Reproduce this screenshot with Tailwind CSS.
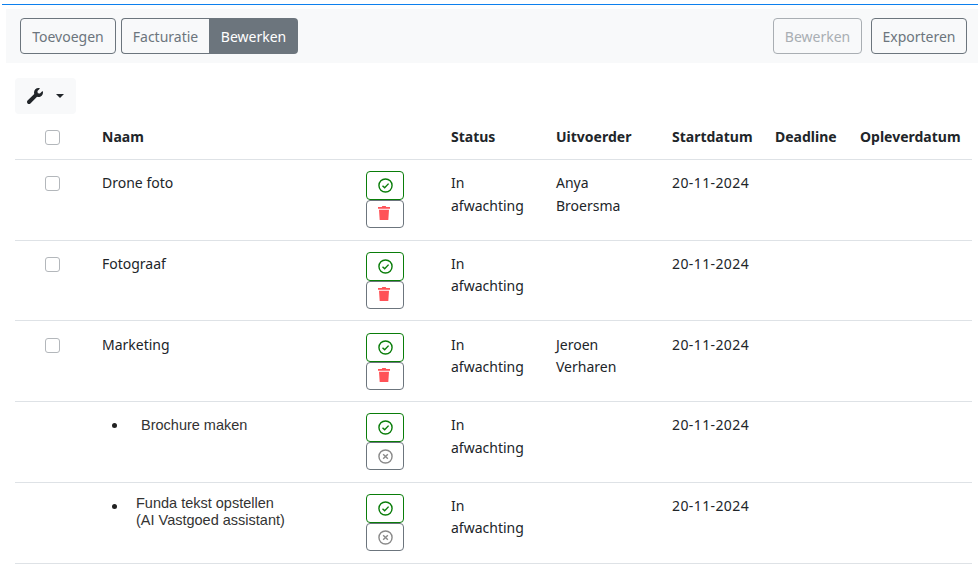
<!DOCTYPE html>
<html lang="nl">
<head>
<meta charset="utf-8"/>
<title>Taken</title>
<script src="https://cdn.jsdelivr.net/npm/@tailwindcss/browser@4"></script>
</head>
<body class="bg-white font-['Noto_Sans',sans-serif] text-[14px] leading-[22.5px] text-[#212529] overflow-hidden h-[577px]">
<div class="h-[5px] border-b border-[#0d80ee] ml-[2px]"></div>

<!-- toolbar -->
<div class="mt-1 ml-1.5 h-[54px] bg-[#f8f9fa] flex items-center pl-3.5 pr-[11px] gap-[5px] leading-[23px]">
  <button class="h-9 w-[96px] border border-[#6c757d] rounded text-[#6c757d]">Toevoegen</button>
  <div class="flex h-9">
    <button class="w-[88px] border border-[#6c757d] border-r-0 rounded-l text-[#6c757d]">Facturatie</button>
    <button class="w-[89px] bg-[#6c757d] rounded-r text-white">Bewerken</button>
  </div>
  <button class="ml-auto h-9 w-[89px] border border-[#a9aeb3] rounded text-[#a9aeb3]">Bewerken</button>
  <button class="ml-1 h-9 w-[96px] border border-[#6c757d] rounded text-[#6c757d]">Exporteren</button>
</div>

<div class="ml-[15px] w-[957px]">
  <button class="mt-[15px] h-9 w-[61px] bg-[#f8f9fa] rounded flex items-center pl-[12px] gap-[13px]">
    <svg class="w-4 h-4" viewBox="0 0 512 512" fill="#212529"><path d="M507.700 109.100c-2.200-9-13.500-12.100-20.100-5.500l-74.400 74.400-67.900-11.300-11.300-67.900 74.400-74.400c6.600-6.600 3.400-17.900-5.700-20.200-47.400-11.700-99.600.9-136.600 37.900-39.600 39.600-50.500 97.100-34 147.200L18.700 402.800c-25 25-25 65.500 0 90.500 25 25 65.500 25 90.500 0l213.200-213.200c50.100 16.700 107.500 5.700 147.400-34.200 37.100-37.100 49.700-89.300 37.900-136.800z"/></svg>
    <span class="w-0 h-0 border-x-[4px] border-x-transparent border-t-[4px] border-t-[#212529]"></span>
  </button>

  <!-- header -->
  <div class="grid grid-cols-[87px_264px_85px_105px_116px_103px_85px_112px] h-[46px] items-center border-b border-[#dee2e6] font-bold text-[14px] leading-[23px]">
    <div class="pl-[30px] pt-px flex"><span class="w-[15px] h-[15px] border border-[#b3b7bb] rounded-[3px] bg-white"></span></div>
    <div>Naam</div><div></div><div>Status</div><div>Uitvoerder</div><div>Startdatum</div><div>Deadline</div><div>Opleverdatum</div>
  </div>

  <!-- Drone foto -->
  <div class="grid grid-cols-[87px_264px_85px_105px_116px_103px_85px_112px] h-[80.7px] border-b border-[#dee2e6] pt-[12.200px]">
    <div class="pl-[30px] pt-[4.100px]"><span class="block w-[15px] h-[15px] border border-[#b3b7bb] rounded-[3px] bg-white"></span></div>
    <div>Drone foto</div>
    <div class="flex flex-col w-[38px] -mt-[0.900px]">
      <button class="h-[29px] border border-[#0a7d0a] rounded flex items-center justify-center"><svg class="w-[15px] h-[15px]" viewBox="0 0 16 16" fill="none" stroke="#0a7d0a" stroke-width="1.500"><circle cx="8" cy="8" r="7"/><path d="M4.800 8.200l2.300 2.300 4.200-4.500"/></svg></button>
      <button class="h-[28px] border border-[#6c757d] rounded flex items-center justify-center"><svg class="w-[14px] h-[16px] -translate-x-px -translate-y-px" viewBox="0 0 14 16" fill="#ff5257"><path d="M1 2h3.800l.5-1h3.400l.5 1H13v1.800H1zM2 4.800h10l-.7 10.200H2.700z"/></svg></button>
    </div>
    <div>In<br/>afwachting</div>
    <div>Anya<br/>Broersma</div>
    <div class="tracking-[0.4px]">20-11-2024</div><div></div><div></div>
  </div>

  <!-- Fotograaf -->
  <div class="grid grid-cols-[87px_264px_85px_105px_116px_103px_85px_112px] h-[80.7px] border-b border-[#dee2e6] pt-[12.200px]">
    <div class="pl-[30px] pt-[4.100px]"><span class="block w-[15px] h-[15px] border border-[#b3b7bb] rounded-[3px] bg-white"></span></div>
    <div>Fotograaf</div>
    <div class="flex flex-col w-[38px] -mt-[0.900px]">
      <button class="h-[29px] border border-[#0a7d0a] rounded flex items-center justify-center"><svg class="w-[15px] h-[15px]" viewBox="0 0 16 16" fill="none" stroke="#0a7d0a" stroke-width="1.500"><circle cx="8" cy="8" r="7"/><path d="M4.800 8.200l2.300 2.300 4.200-4.500"/></svg></button>
      <button class="h-[28px] border border-[#6c757d] rounded flex items-center justify-center"><svg class="w-[14px] h-[16px] -translate-x-px -translate-y-px" viewBox="0 0 14 16" fill="#ff5257"><path d="M1 2h3.800l.5-1h3.400l.5 1H13v1.800H1zM2 4.800h10l-.7 10.200H2.700z"/></svg></button>
    </div>
    <div>In<br/>afwachting</div>
    <div></div>
    <div class="tracking-[0.4px]">20-11-2024</div><div></div><div></div>
  </div>

  <!-- Marketing -->
  <div class="grid grid-cols-[87px_264px_85px_105px_116px_103px_85px_112px] h-[80.7px] border-b border-[#dee2e6] pt-[12.200px]">
    <div class="pl-[30px] pt-[4.100px]"><span class="block w-[15px] h-[15px] border border-[#b3b7bb] rounded-[3px] bg-white"></span></div>
    <div>Marketing</div>
    <div class="flex flex-col w-[38px] -mt-[0.900px]">
      <button class="h-[29px] border border-[#0a7d0a] rounded flex items-center justify-center"><svg class="w-[15px] h-[15px]" viewBox="0 0 16 16" fill="none" stroke="#0a7d0a" stroke-width="1.500"><circle cx="8" cy="8" r="7"/><path d="M4.800 8.200l2.300 2.300 4.200-4.500"/></svg></button>
      <button class="h-[28px] border border-[#6c757d] rounded flex items-center justify-center"><svg class="w-[14px] h-[16px] -translate-x-px -translate-y-px" viewBox="0 0 14 16" fill="#ff5257"><path d="M1 2h3.800l.5-1h3.400l.5 1H13v1.800H1zM2 4.800h10l-.7 10.200H2.700z"/></svg></button>
    </div>
    <div>In<br/>afwachting</div>
    <div>Jeroen<br/>Verharen</div>
    <div class="tracking-[0.4px]">20-11-2024</div><div></div><div></div>
  </div>

  <!-- Brochure maken -->
  <div class="grid grid-cols-[87px_264px_85px_105px_116px_103px_85px_112px] h-[80.7px] border-b border-[#dee2e6] pt-[12.200px]">
    <div></div>
    <div class="relative -ml-[87px] font-['Liberation_Sans',sans-serif] text-[14.500px] text-[#333] leading-[17px] pt-[3.100px] pl-[126px]">
      <span class="absolute left-[97px] top-[9.100px] w-[5px] h-[5px] rounded-full bg-[#222]"></span>Brochure maken
    </div>
    <div class="flex flex-col w-[38px] -mt-[0.900px]">
      <button class="h-[29px] border border-[#0a7d0a] rounded flex items-center justify-center"><svg class="w-[15px] h-[15px]" viewBox="0 0 16 16" fill="none" stroke="#0a7d0a" stroke-width="1.500"><circle cx="8" cy="8" r="7"/><path d="M4.800 8.200l2.300 2.300 4.200-4.500"/></svg></button>
      <button class="h-[28px] border border-[#6c757d] rounded flex items-center justify-center"><svg class="w-[15px] h-[15px]" viewBox="0 0 16 16" fill="none" stroke="#8a8a8a" stroke-width="1.500"><circle cx="8" cy="8" r="7"/><path d="M5.500 5.500l5 5m0-5l-5 5"/></svg></button>
    </div>
    <div>In<br/>afwachting</div>
    <div></div>
    <div class="tracking-[0.4px]">20-11-2024</div><div></div><div></div>
  </div>

  <!-- Funda tekst -->
  <div class="grid grid-cols-[87px_264px_85px_105px_116px_103px_85px_112px] h-[81px] border-b border-[#dee2e6] pt-[12.200px]">
    <div></div>
    <div class="relative -ml-[87px] font-['Liberation_Sans',sans-serif] text-[14.500px] text-[#333] leading-[17px] pt-[0.100px] pl-[121px]">
      <span class="absolute left-[97px] top-[9.100px] w-[5px] h-[5px] rounded-full bg-[#222]"></span>Funda tekst opstellen<br/>(AI Vastgoed assistant)
    </div>
    <div class="flex flex-col w-[38px] -mt-[0.900px]">
      <button class="h-[29px] border border-[#0a7d0a] rounded flex items-center justify-center"><svg class="w-[15px] h-[15px]" viewBox="0 0 16 16" fill="none" stroke="#0a7d0a" stroke-width="1.500"><circle cx="8" cy="8" r="7"/><path d="M4.800 8.200l2.300 2.300 4.200-4.500"/></svg></button>
      <button class="h-[28px] border border-[#6c757d] rounded flex items-center justify-center"><svg class="w-[15px] h-[15px]" viewBox="0 0 16 16" fill="none" stroke="#8a8a8a" stroke-width="1.500"><circle cx="8" cy="8" r="7"/><path d="M5.500 5.500l5 5m0-5l-5 5"/></svg></button>
    </div>
    <div>In<br/>afwachting</div>
    <div></div>
    <div class="tracking-[0.4px]">20-11-2024</div><div></div><div></div>
  </div>
</div>
</body>
</html>
